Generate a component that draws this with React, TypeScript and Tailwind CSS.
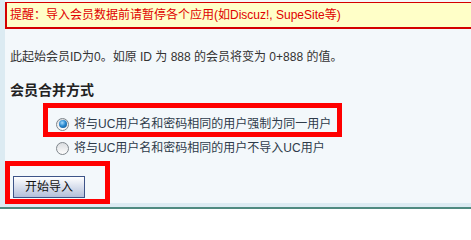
const FONT = { fontFamily: '"Liberation Sans", Arial, "Noto Sans CJK SC", sans-serif' };

function Radio({ checked }: { checked: boolean }) {
  return (
    <span className="flex h-[13px] w-[13px] shrink-0 items-center justify-center rounded-full border border-[#7f868c] bg-gradient-to-b from-[#dadde0] to-[#fdfdfd]">
      {checked ? (
        <span className="h-[8px] w-[8px] rounded-full bg-[radial-gradient(circle_at_40%_35%,#a8ddff_0%,#2a8ad0_45%,#0b4a86_100%)]" />
      ) : null}
    </span>
  );
}

export default function App() {
  return (
    <div className="flex h-[209px] w-[471px] flex-col overflow-hidden bg-[#dcebf2]" style={FONT}>
      <div className="ml-[5px] flex h-[203px] flex-col bg-[#f3f8fb] pt-[2px]">
        <div className="h-[27px] border-b-2 border-l-2 border-t border-[#d40000] bg-[#ffffc8] pl-[3px] text-[12px] leading-[24px] text-[#e00000]">
          提醒：导入会员数据前请暂停各个应用(如Discuz!, SupeSite等)
        </div>

        <p className="mt-[20px] pl-[5px] text-[12px] leading-[16px] text-[#333]">
          此起始会员ID为0。如原 ID 为 888 的会员将变为 0+888 的值。
        </p>

        <h3 className="mt-[16px] pl-[5px] text-[14px] font-bold leading-[18px] text-[#222]">会员合并方式</h3>

        <div className="ml-[38px] mt-[4px] w-[299px] border-[5px] border-[#ff0000]">
          <label className="mt-[8px] flex h-[16px] items-center gap-[5px] pl-[8px] text-[12px] text-[#2e3b4a]">
            <Radio checked />
            <span>将与UC用户名和密码相同的用户强制为同一用户</span>
          </label>
        </div>

        <label className="ml-[51px] mt-[3px] flex h-[16px] items-center gap-[5px] text-[12px] text-[#2e3b4a]">
          <Radio checked={false} />
          <span>将与UC用户名和密码相同的用户不导入UC用户</span>
        </label>

        <div className="mt-[5px] w-[105px] border-[5px] border-[#ff0000] pb-[1px] pl-[3px] pt-[8px]">
          <button className="h-[22px] w-[72px] border border-[#3d5488] bg-gradient-to-b from-[#ffffff] to-[#b3bfda] text-[12px] text-[#111]">
            开始导入
          </button>
        </div>
      </div>
      <div className="flex-1" />
      <div className="h-[2px] bg-[#4f8a80]" />
    </div>
  );
}
